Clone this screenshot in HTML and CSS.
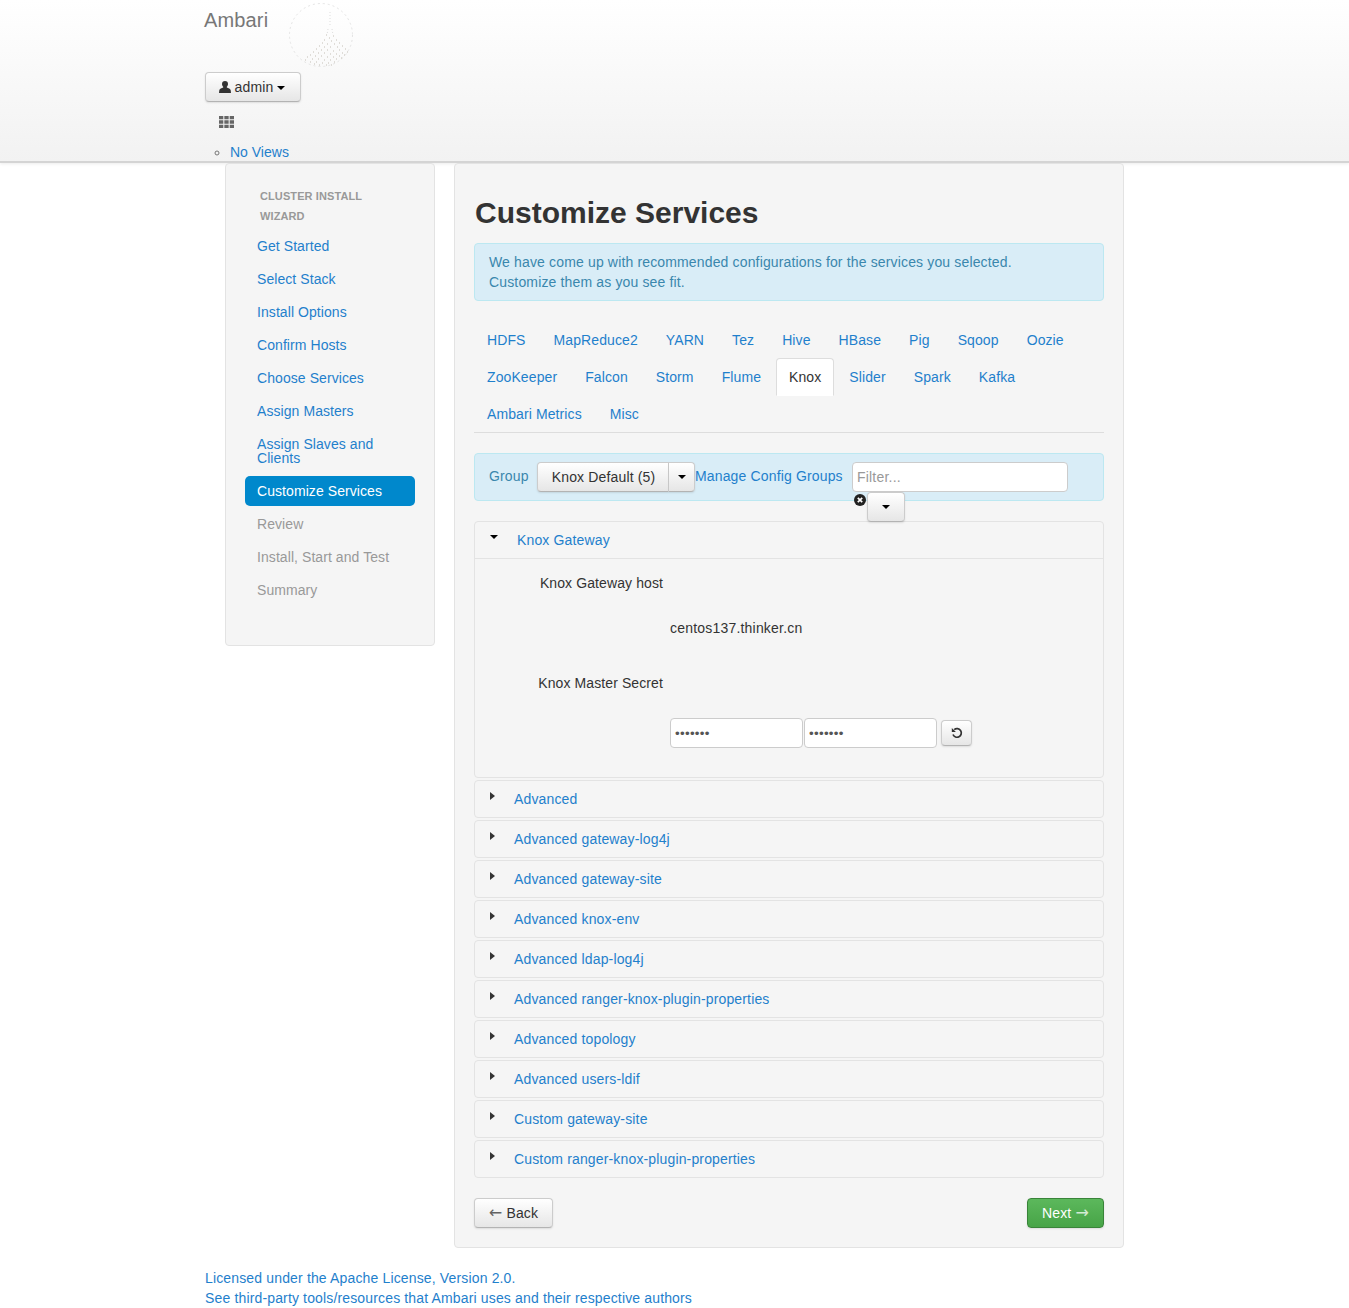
FILE: index.html
```html
<!DOCTYPE html>
<html>
<head>
  <meta charset="UTF-8">
  <title>Ambari</title>
  <link rel="stylesheet" href="styles.css">
</head>
<body>

<div class="navbar">
  <div class="container">
    <div class="brand-row">
      <a class="brand">Ambari</a>
      <svg class="logo" width="66" height="66" viewBox="0 0 66 66">
        <circle cx="32" cy="33" r="31.500" fill="none" stroke="#e4e4e4" stroke-width="1" stroke-dasharray="2 3"/>
        <path d="M41 10v15M39 27l-1 6M43 27l1 6" fill="none" stroke="#ddd" stroke-width="1" stroke-dasharray="1 2"/>
        <path d="M37 33h1M44 34h1M40 36h1M35 38h1M42 39h1M47 38h1M33 41h1M38 42h1M45 42h1M50 41h1M30 44h1M35 45h1M41 45h1M48 45h1M53 44h1M27 47h1M32 48h1M38 48h1M44 49h1M50 48h1M56 47h1M24 50h1M29 51h1M35 51h1M41 52h1M47 52h1M53 51h1M58 50h1M21 53h1M26 54h1M32 54h1M38 55h1M44 55h1M50 54h1M55 53h1M18 55h1M23 57h1M29 57h1M35 58h1M41 58h1M47 57h1M52 56h1M16 58h1M21 60h1M27 60h1M33 61h1M39 61h1M45 60h1M30 63h1M37 63h1M42 63h1M25 62h1" fill="none" stroke="#c4bfb6" stroke-width="1"/>
      </svg>
    </div>
    <button class="btn user-btn">
      <svg class="icon-user" width="12" height="12" viewBox="0 0 12 12"><path d="M6 0C4 0 3 1.300 3 3c0 1.200.5 2.200 1.200 2.800v.8C2.800 7.200.5 7.800.3 9.300L0 12h12l-.3-2.700C11.500 7.800 9.200 7.200 7.800 6.600v-.8C8.500 5.200 9 4.200 9 3 9 1.300 8 0 6 0z" fill="#333"/></svg>
      admin <span class="caret"></span>
    </button>
    <div class="views-toggle">
      <svg width="15" height="12" viewBox="0 0 15 12"><path d="M0 0h4.300v3.300H0zM5.350 0h4.300v3.300h-4.300zM10.700 0H15v3.300h-4.300zM0 4.350h4.300v3.300H0zM5.350 4.350h4.300v3.300h-4.300zM10.700 4.350H15v3.300h-4.300zM0 8.700h4.300V12H0zM5.350 8.700h4.300V12h-4.300zM10.700 8.700H15V12h-4.300z" fill="#666"/></svg>
    </div>
    <ul class="views-list">
      <li><a>No Views</a></li>
    </ul>
  </div>
</div>

<div class="container">
  <div class="wizard">

    <div class="well sidebar">
      <div class="nav-header">Cluster Install Wizard</div>
      <a class="step">Get Started</a>
      <a class="step">Select Stack</a>
      <a class="step">Install Options</a>
      <a class="step">Confirm Hosts</a>
      <a class="step">Choose Services</a>
      <a class="step">Assign Masters</a>
      <a class="step two-line">Assign Slaves and Clients</a>
      <a class="step active">Customize Services</a>
      <a class="step disabled">Review</a>
      <a class="step disabled">Install, Start and Test</a>
      <a class="step disabled">Summary</a>
    </div>

    <div class="well content">
      <h2>Customize Services</h2>
      <div class="alert">We have come up with recommended configurations for the services you selected. Customize them as you see fit.</div>

      <ul class="tabs">
        <li><a>HDFS</a></li>
        <li><a>MapReduce2</a></li>
        <li><a>YARN</a></li>
        <li><a>Tez</a></li>
        <li><a>Hive</a></li>
        <li><a>HBase</a></li>
        <li><a>Pig</a></li>
        <li><a>Sqoop</a></li>
        <li><a>Oozie</a></li>
        <li><a>ZooKeeper</a></li>
        <li><a>Falcon</a></li>
        <li><a>Storm</a></li>
        <li><a>Flume</a></li>
        <li class="active"><a>Knox</a></li>
        <li><a>Slider</a></li>
        <li><a>Spark</a></li>
        <li><a>Kafka</a></li>
        <li class="break"></li>
        <li><a>Ambari Metrics</a></li>
        <li><a>Misc</a></li>
      </ul>

      <div class="group-bar">
        <span class="group-label">Group</span>
        <div class="btn-group">
          <button class="btn group-name">Knox Default (5)</button>
          <button class="btn group-caret"><span class="caret"></span></button>
        </div>
        <a class="manage">Manage Config Groups</a>
        <div class="filter">
          <input class="filter-input" type="text" placeholder="Filter...">
          <svg class="filter-clear" width="12" height="12" viewBox="0 0 12 12">
            <circle cx="6" cy="6" r="6" fill="#222"/>
            <path d="M3.800 3.800l4.400 4.400M8.200 3.800L3.800 8.200" stroke="#fff" stroke-width="1.700"/>
          </svg>
          <button class="btn filter-caret"><span class="caret"></span></button>
        </div>
      </div>

      <div class="panel open">
        <div class="panel-head">
          <span class="caret"></span><a>Knox Gateway</a>
        </div>
        <div class="panel-body">
          <div class="config-label first">Knox Gateway host</div>
          <div class="config-value">centos137.thinker.cn</div>
          <div class="config-label second">Knox Master Secret</div>
          <div class="config-inputs">
            <input class="pw" type="password" value="1234567">
            <input class="pw" type="password" value="1234567">
            <button class="btn undo">
              <svg width="12" height="12" viewBox="0 0 12 12"><path d="M3.200 2.700A4.300 4.300 0 1 1 2 7.500" fill="none" stroke="#333" stroke-width="1.700"/><path d="M.8 1v4.100h4.100z" fill="#333"/></svg>
            </button>
          </div>
        </div>
      </div>

      <div class="panel"><div class="panel-head"><span class="caret-right"></span><a>Advanced</a></div></div>
      <div class="panel"><div class="panel-head"><span class="caret-right"></span><a>Advanced gateway-log4j</a></div></div>
      <div class="panel"><div class="panel-head"><span class="caret-right"></span><a>Advanced gateway-site</a></div></div>
      <div class="panel"><div class="panel-head"><span class="caret-right"></span><a>Advanced knox-env</a></div></div>
      <div class="panel"><div class="panel-head"><span class="caret-right"></span><a>Advanced ldap-log4j</a></div></div>
      <div class="panel"><div class="panel-head"><span class="caret-right"></span><a>Advanced ranger-knox-plugin-properties</a></div></div>
      <div class="panel"><div class="panel-head"><span class="caret-right"></span><a>Advanced topology</a></div></div>
      <div class="panel"><div class="panel-head"><span class="caret-right"></span><a>Advanced users-ldif</a></div></div>
      <div class="panel"><div class="panel-head"><span class="caret-right"></span><a>Custom gateway-site</a></div></div>
      <div class="panel"><div class="panel-head"><span class="caret-right"></span><a>Custom ranger-knox-plugin-properties</a></div></div>

      <div class="wizard-nav">
        <button class="btn back"><span class="arrow">&larr;</span> Back</button>
        <button class="btn next">Next <span class="arrow">&rarr;</span></button>
      </div>
    </div>
  </div>

  <div class="footer">
    <a>Licensed under the Apache License, Version 2.0.</a><br>
    <a>See third-party tools/resources that Ambari uses and their respective authors</a>
  </div>
</div>

</body>
</html>
```

FILE: styles.css
```css
body {
  margin: 0;
  font-family: "Liberation Sans", Arial, sans-serif;
  font-size: 14px;
  line-height: 20px;
  letter-spacing: 0.15px;
  color: #333;
  background-color: #fff;
}
a {
  color: #1f80cc;
  text-decoration: none;
}
.container {
  width: 939px;
  margin: 0 auto;
}

/* top bar */
.navbar {
  height: 161px;
  overflow: hidden;
  background: linear-gradient(to bottom, #fff, #f2f2f2);
  border-bottom: 2px solid #d4d4d4;
  box-shadow: 0 1px 3px rgba(0, 0, 0, 0.08);
}
.brand-row {
  display: flex;
  height: 72px;
}
.brand {
  margin: 10px 0 0 -1px;
  font-size: 20px;
  color: #777;
}
.logo {
  margin: 2px 0 0 21px;
}
.btn {
  font-family: inherit;
  font-size: 14px;
  line-height: 20px;
  letter-spacing: inherit;
  color: #333;
  padding: 4px 14px;
  background: linear-gradient(to bottom, #fff, #e6e6e6);
  border: 1px solid #ccc;
  border-bottom-color: #b3b3b3;
  border-radius: 4px;
  box-shadow: 0 1px 2px rgba(0, 0, 0, 0.1);
}
.user-btn {
  display: block;
  width: 96px;
  height: 30px;
  padding: 0 2px 0 0;
}
.icon-user {
  vertical-align: -1px;
}
.caret {
  display: inline-block;
  width: 0;
  height: 0;
  vertical-align: middle;
  border-top: 4px solid #000;
  border-left: 4px solid transparent;
  border-right: 4px solid transparent;
}
.views-toggle {
  height: 12px;
  margin: 14px 0 0 14px;
}
.views-toggle svg {
  display: block;
}
.views-list {
  margin: 14px 0 0;
  padding: 0 0 0 25px;
  list-style: circle;
  letter-spacing: 0;
  color: #777;
}

/* page */
.wizard {
  display: flex;
  align-items: flex-start;
  gap: 19px;
  margin-left: 20px;
}
.well {
  background-color: #f5f5f5;
  border: 1px solid #e3e3e3;
  border-radius: 4px;
  box-sizing: border-box;
}
.sidebar {
  width: 210px;
  height: 483px;
  padding: 22px 19px;
}
.nav-header {
  padding: 0 15px;
  font-size: 11px;
  font-weight: bold;
  letter-spacing: 0.1px;
  color: #999;
  text-transform: uppercase;
  margin-bottom: 5px;
}
.step {
  display: block;
  padding: 5px 12px;
  margin-bottom: 3px;
  line-height: 20px;
  letter-spacing: 0.07px;
  border-radius: 5px;
}
.step.two-line {
  padding: 8px 12px;
  line-height: 14px;
}
.step.active {
  color: #fff;
  background-color: #0088cc;
}
.step.disabled {
  color: #999;
}
.content {
  width: 670px;
  height: 1085px;
  padding: 20px 19px;
}
h2 {
  margin: 9px 0 10px 1px;
  font-size: 30px;
  line-height: 40px;
  font-weight: bold;
  letter-spacing: 0;
}
.alert {
  padding: 8px 35px 8px 14px;
  color: #3a87ad;
  background-color: #d9edf7;
  border: 1px solid #bce8f1;
  border-radius: 4px;
}

/* tabs */
.tabs {
  display: flex;
  flex-wrap: wrap;
  margin: 20px 0;
  padding: 0;
  list-style: none;
  letter-spacing: 0.1px;
  border-bottom: 1px solid #ddd;
}
.tabs li {
  margin-right: 2px;
}
.tabs a {
  display: block;
  height: 37px;
  box-sizing: border-box;
  padding: 8px 12px 9px;
  border: 1px solid transparent;
  border-radius: 4px 4px 0 0;
}
.tabs li.break {
  flex-basis: 100%;
  height: 0;
}
.tabs li.active a {
  height: 38px;
  margin-bottom: -1px;
  color: #333;
  background-color: #fff;
  border-color: #ddd;
  border-bottom-color: transparent;
}

/* config group bar */
.group-bar {
  display: flex;
  align-items: center;
  height: 48px;
  box-sizing: border-box;
  padding-left: 14px;
  margin-bottom: 20px;
  background-color: #d9edf7;
  border: 1px solid #bce8f1;
  border-radius: 4px;
}
.group-label {
  width: 48px;
  margin-bottom: 2px;
  color: #3a87ad;
}
.btn-group {
  display: flex;
}
.group-name {
  width: 132px;
  height: 30px;
  padding: 0 0 0 1px;
  border-radius: 4px 0 0 4px;
}
.group-caret {
  width: 26px;
  height: 30px;
  padding: 0;
  border-left-width: 0;
  border-radius: 0 4px 4px 0;
}
.group-caret .caret {
  display: block;
  margin: 0 auto;
}
.manage {
  width: 157px;
  margin-bottom: 2px;
}
.filter {
  position: relative;
}
.filter-input {
  display: block;
  width: 216px;
  height: 30px;
  box-sizing: border-box;
  padding: 4px;
  font-family: inherit;
  font-size: 14px;
  letter-spacing: 0.2px;
  background-color: #fff;
  border: 1px solid #ccc;
  border-radius: 4px;
}
.filter-input::placeholder {
  color: #999;
}
.filter-clear {
  position: absolute;
  left: 2px;
  top: 32px;
}
.filter-caret {
  position: absolute;
  left: 15px;
  top: 30px;
  width: 38px;
  height: 30px;
  padding: 0 0 2px;
}

/* collapsible sections */
.panel {
  box-sizing: border-box;
  margin-bottom: 2px;
  border: 1px solid #e3e3e3;
  border-radius: 4px;
}
.panel-head {
  display: flex;
  height: 36px;
  padding-left: 15px;
  align-items: center;
}
.panel-head .caret {
  margin: -6px 19px 0 0;
  flex: none;
}
.caret-right {
  flex: none;
  width: 0;
  height: 0;
  margin: -6px 19px 0 0;
  border-left: 5px solid #333;
  border-top: 4px solid transparent;
  border-bottom: 4px solid transparent;
}
.panel.open .panel-head {
  border-bottom: 1px solid #e3e3e3;
}
.panel-body {
  height: 218px;
  box-sizing: border-box;
}
.config-label {
  width: 188px;
  text-align: right;
  letter-spacing: 0.1px;
}
.config-label.first {
  padding-top: 14px;
}
.config-label.second {
  padding-top: 35px;
}
.config-value {
  margin: 25px 0 0 195px;
  letter-spacing: 0.2px;
}
.config-inputs {
  display: flex;
  align-items: center;
  gap: 1px;
  margin: 25px 0 0 195px;
}
.pw {
  width: 133px;
  height: 30px;
  box-sizing: border-box;
  padding: 4px;
  letter-spacing: 0.3px;
  background-color: #fff;
  border: 1px solid #ccc;
  border-radius: 4px;
  color: #555;
}
.undo {
  width: 31px;
  height: 26px;
  margin-left: 3px;
  padding: 0;
}
.undo svg {
  display: block;
  margin: 0 auto;
}

/* bottom */
.wizard-nav {
  display: flex;
  justify-content: space-between;
  margin-top: 20px;
}
.back {
  width: 79px;
  height: 30px;
  padding: 0;
}
.next {
  width: 77px;
  height: 30px;
  padding: 0;
  color: #fff;
  background: linear-gradient(to bottom, #5cb85c, #47a447);
  border-color: #398439;
}
.arrow {
  font-family: "DejaVu Sans", sans-serif;
  font-size: 16px;
  line-height: 1;
  opacity: 0.75;
}
.footer {
  margin-top: 20px;
}
```
